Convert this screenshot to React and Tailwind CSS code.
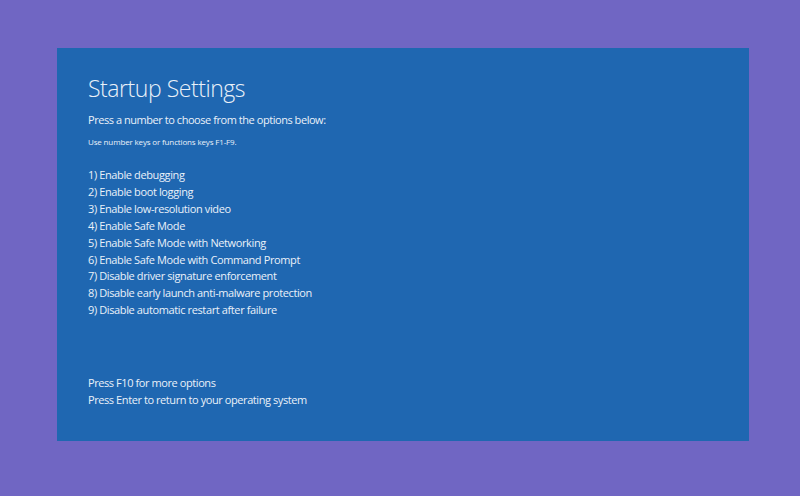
const options = [
  '1) Enable debugging',
  '2) Enable boot logging',
  '3) Enable low-resolution video',
  '4) Enable Safe Mode',
  '5) Enable Safe Mode with Networking',
  '6) Enable Safe Mode with Command Prompt',
  '7) Disable driver signature enforcement',
  '8) Disable early launch anti-malware protection',
  '9) Disable automatic restart after failure',
]

export default function App() {
  return (
    <div
      className="w-[800px] h-[496px] bg-[#7066c3] pt-[48px] pl-[57px]"
      style={{ fontFamily: '"Open Sans", "Noto Sans", sans-serif' }}
    >
      <div className="w-[692px] h-[393px] bg-[#1f67b1] text-[#eaf1f9] pl-[31px] pt-[24px] flex flex-col">
        <h1 className="text-[23px] font-light leading-[32px] tracking-[-0.45px]">Startup Settings</h1>
        <p className="text-[11px] leading-[16px] mt-[8px] tracking-[-0.45px]">
          Press a number to choose from the options below:
        </p>
        <p className="text-[8px] leading-[12px] mt-[8px] tracking-[-0.15px]">
          Use number keys or functions keys F1-F9.
        </p>
        <ul className="mt-[19px] text-[11px] leading-[16.9px] tracking-[-0.38px]">
          {options.map((opt) => (
            <li key={opt}>{opt}</li>
          ))}
        </ul>
        <div className="mt-[55px] text-[11px] leading-[17px] tracking-[-0.42px]">
          <p>Press F10 for more options</p>
          <p>Press Enter to return to your operating system</p>
        </div>
      </div>
    </div>
  )
}
